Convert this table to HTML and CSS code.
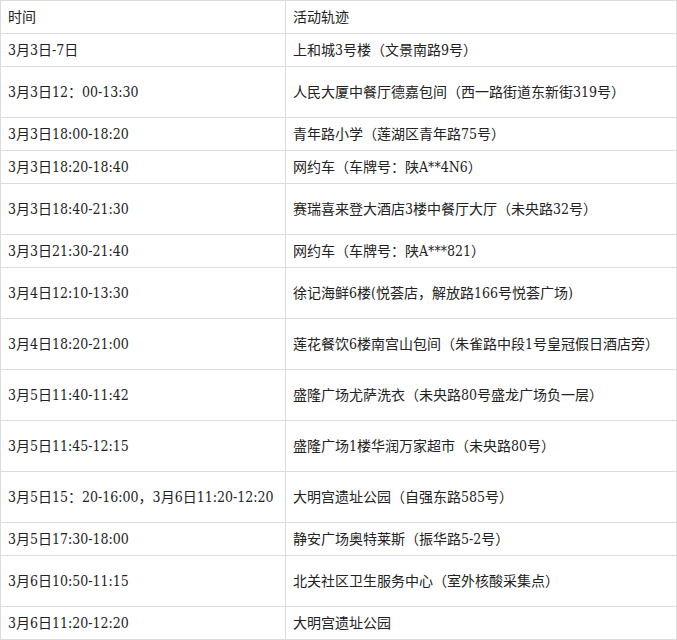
FILE: index.html
```html
<!DOCTYPE html>
<html lang="zh">
<head>
<meta charset="utf-8">
<link rel="stylesheet" href="styles.css">
</head>
<body>
<table class="trace">
  <colgroup><col class="c-time"><col class="c-place"></colgroup>
  <tr class="short"><td>时间</td><td>活动轨迹</td></tr>
  <tr class="short"><td>3月3日-7日</td><td>上和城3号楼（文景南路9号）</td></tr>
  <tr class="tall"><td>3月3日12：00-13:30</td><td>人民大厦中餐厅德嘉包间（西一路街道东新街319号）</td></tr>
  <tr class="short"><td>3月3日18:00-18:20</td><td>青年路小学（莲湖区青年路75号）</td></tr>
  <tr class="short"><td>3月3日18:20-18:40</td><td>网约车（车牌号：陕A**4N6）</td></tr>
  <tr class="tall"><td>3月3日18:40-21:30</td><td>赛瑞喜来登大酒店3楼中餐厅大厅（未央路32号）</td></tr>
  <tr class="short"><td>3月3日21:30-21:40</td><td>网约车（车牌号：陕A***821）</td></tr>
  <tr class="tall"><td>3月4日12:10-13:30</td><td>徐记海鲜6楼(悦荟店，解放路166号悦荟广场)</td></tr>
  <tr class="tall"><td>3月4日18:20-21:00</td><td>莲花餐饮6楼南宫山包间（朱雀路中段1号皇冠假日酒店旁）</td></tr>
  <tr class="tall"><td>3月5日11:40-11:42</td><td>盛隆广场尤萨洗衣（未央路80号盛龙广场负一层）</td></tr>
  <tr class="tall"><td>3月5日11:45-12:15</td><td>盛隆广场1楼华润万家超市（未央路80号）</td></tr>
  <tr class="tall"><td>3月5日15：20-16:00，3月6日11:20-12:20</td><td>大明宫遗址公园（自强东路585号）</td></tr>
  <tr class="short"><td>3月5日17:30-18:00</td><td>静安广场奥特莱斯（振华路5-2号）</td></tr>
  <tr class="tall"><td>3月6日10:50-11:15</td><td>北关社区卫生服务中心（室外核酸采集点）</td></tr>
  <tr class="short"><td>3月6日11:20-12:20</td><td>大明宫遗址公园</td></tr>
</table>
</body>
</html>
```
FILE: styles.css
```css
html, body {
  margin: 0;
  padding: 0;
  background: #fff;
}
.trace {
  border-collapse: collapse;
  width: 677px;
  table-layout: fixed;
  font-family: "DejaVu Serif", "Noto Sans CJK SC", serif;
  font-stretch: condensed;
  font-size: 14px;
  color: #222;
}
.c-time { width: 285px; }
.trace td {
  border: 1px solid #dcdcdc;
  padding: 0 7px;
  vertical-align: middle;
  white-space: nowrap;
  line-height: 16px;
}
.short td { height: 32px; }
.tall td { height: 50px; }
```
